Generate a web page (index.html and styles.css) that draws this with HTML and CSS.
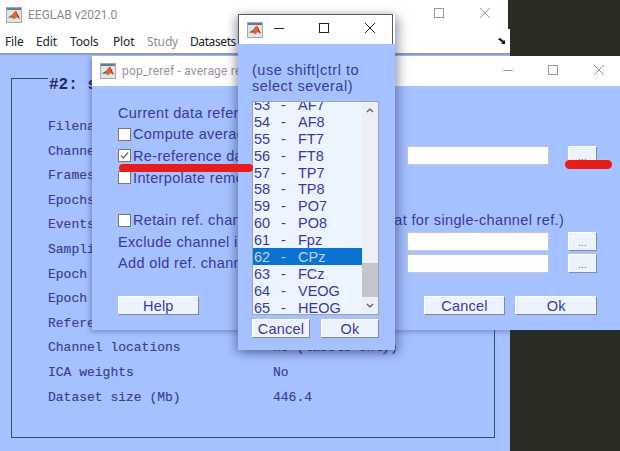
FILE: index.html
```html
<!DOCTYPE html>
<html lang="en">
<head>
<meta charset="utf-8">
<title>EEGLAB</title>
<link rel="stylesheet" href="styles.css">
</head>
<body>
<svg class="defs" width="0" height="0">
  <symbol id="ml" viewBox="0 0 16 16">
    <rect x="0.5" y="0.5" width="15" height="15" fill="#e4e4e4" stroke="#a8a8a8"/>
    <rect x="1" y="1" width="14" height="2" fill="#5f7f9f"/>
    <path d="M2 10.5 L6 8 L8 5 L10 3.5 L14 12 L11 10 L8 12.5 L6 10.5 Z" fill="#e8622a"/>
    <path d="M2 10.5 L6 8 L7.5 10 L6 10.5 Z" fill="#3c78b8"/>
    <path d="M10 3.5 L14 12 L11.5 10 Z" fill="#b5341a"/>
  </symbol>
</svg>

<section class="win main-win">
  <header class="titlebar main-title">
    <svg class="appicon"><use href="#ml"/></svg>
    <span class="title-text">EEGLAB v2021.0</span>
    <span class="ctl ctl-max"></span>
    <svg class="ctl-x" viewBox="0 0 10 10"><path d="M0 0L10 10M10 0L0 10"/></svg>
  </header>
  <nav class="menubar">
    <span class="m m-file">File</span><span class="m m-edit">Edit</span><span class="m m-tools">Tools</span><span class="m m-plot">Plot</span><span class="m m-study">Study</span><span class="m m-data">Datasets</span>
    <svg class="dock" viewBox="0 0 8 7"><path d="M0 1L2 0L6 3L7 2L7 6L3 6L4.5 4.5L1 2Z"/></svg>
  </nav>
  <div class="main-body">
    <div class="frame">
      <h2 class="frame-title">#2: sub</h2>
      <dl class="info">
        <div class="info-row"><dt>Filename</dt><dd></dd></div>
        <div class="info-row"><dt>Channels</dt><dd></dd></div>
        <div class="info-row"><dt>Frames</dt><dd></dd></div>
        <div class="info-row"><dt>Epochs</dt><dd></dd></div>
        <div class="info-row"><dt>Events</dt><dd></dd></div>
        <div class="info-row"><dt>Sampling</dt><dd></dd></div>
        <div class="info-row"><dt>Epoch</dt><dd></dd></div>
        <div class="info-row"><dt>Epoch</dt><dd></dd></div>
        <div class="info-row"><dt>Reference</dt><dd></dd></div>
        <div class="info-row"><dt>Channel locations</dt><dd>no (labels only)</dd></div>
        <div class="info-row"><dt>ICA weights</dt><dd>No</dd></div>
        <div class="info-row"><dt>Dataset size (Mb)</dt><dd>446.4</dd></div>
      </dl>
    </div>
  </div>
</section>

<section class="win dlg-win">
  <header class="titlebar dlg-title">
    <svg class="appicon"><use href="#ml"/></svg>
    <span class="title-text">pop_reref - average reference</span>
    <span class="ctl-min"></span>
    <span class="ctl ctl-max"></span>
    <svg class="ctl-x" viewBox="0 0 10 10"><path d="M0 0L10 10M10 0L0 10"/></svg>
  </header>
  <div class="dlg-body">
    <div class="drow"><span class="lbl">Current data reference state is: unknown</span></div>
    <div class="drow"><span class="cb"></span><span class="lbl">Compute average reference</span></div>
    <div class="drow"><span class="cb"><svg viewBox="0 0 11 11"><path d="M2 5.5L4.5 8L9 2.5"/></svg></span><span class="lbl">Re-reference data</span><span class="field"></span><span class="dots">...</span></div>
    <div class="drow"><span class="cb"></span><span class="lbl">Interpolate removed channels</span></div>
    <div class="drow drow-empty"></div>
    <div class="drow"><span class="cb"></span><span class="lbl">Retain ref. channel(s) in data (will be flat for single-channel ref.)</span></div>
    <div class="drow"><span class="lbl">Exclude channel indices (EMG, EOG)</span><span class="field"></span><span class="dots">...</span></div>
    <div class="drow"><span class="lbl">Add old ref. channel back</span><span class="field"></span><span class="dots">...</span></div>
    <div class="dlg-actions">
      <button class="btn btn-help">Help</button>
      <button class="btn btn-cancel">Cancel</button>
      <button class="btn btn-ok">Ok</button>
    </div>
  </div>
</section>

<section class="win pick-win">
  <header class="titlebar pick-title">
    <svg class="appicon"><use href="#ml"/></svg>
    <span class="ctl-min"></span>
    <span class="ctl ctl-max dark"></span>
    <svg class="ctl-x dark" viewBox="0 0 10 10"><path d="M0 0L10 10M10 0L0 10"/></svg>
  </header>
  <div class="pick-body">
    <p class="hint">(use shift|ctrl to<br>select several)</p>
    <div class="listbox">
      <ul class="items">
        <li><b>53</b><i>-</i><span>AF7</span></li>
        <li><b>54</b><i>-</i><span>AF8</span></li>
        <li><b>55</b><i>-</i><span>FT7</span></li>
        <li><b>56</b><i>-</i><span>FT8</span></li>
        <li><b>57</b><i>-</i><span>TP7</span></li>
        <li><b>58</b><i>-</i><span>TP8</span></li>
        <li><b>59</b><i>-</i><span>PO7</span></li>
        <li><b>60</b><i>-</i><span>PO8</span></li>
        <li><b>61</b><i>-</i><span>Fpz</span></li>
        <li class="sel"><b>62</b><i>-</i><span>CPz</span></li>
        <li><b>63</b><i>-</i><span>FCz</span></li>
        <li><b>64</b><i>-</i><span>VEOG</span></li>
        <li><b>65</b><i>-</i><span>HEOG</span></li>
      </ul>
      <div class="scroll">
        <svg class="arrow" viewBox="0 0 8 5"><path d="M1 4L4 1L7 4"/></svg>
        <span class="track"><span class="thumb"></span></span>
        <svg class="arrow" viewBox="0 0 8 5"><path d="M1 1L4 4L7 1"/></svg>
      </div>
    </div>
    <div class="pick-actions">
      <button class="btn">Cancel</button>
      <button class="btn">Ok</button>
    </div>
  </div>
</section>

<span class="mark mark-a"></span>
<span class="mark mark-b"></span>
</body>
</html>
```

FILE: styles.css
```css
* { box-sizing: border-box; }
html, body { margin: 0; padding: 0; }
body {
  position: relative;
  width: 620px;
  height: 451px;
  overflow: hidden;
  background: #2b2b24;
  font-family: "Liberation Sans", sans-serif;
  color: #3a3a9c;
}
.defs { position: absolute; }

/* windows on the desktop */
.win { position: absolute; display: flex; flex-direction: column; overflow: hidden; }
.main-win { left: 0; top: 0; width: 510px; height: 451px; }
.dlg-win { left: 92px; top: 56px; width: 528px; height: 274px; box-shadow: -2px 2px 5px rgba(40, 50, 110, .35); overflow: visible; }
.pick-win { left: 238px; top: 14px; width: 157px; height: 336px; box-shadow: 4px 3px 10px rgba(30, 40, 90, .4), -4px 2px 8px rgba(30, 40, 90, .3); overflow: visible; }

.titlebar { position: relative; display: flex; align-items: center; flex: none; background: #fff; }
.main-title { height: 29px; width: 508px; padding-left: 6px; }
.dlg-title { height: 30px; padding-left: 8px; }
.pick-title { height: 30px; width: 155px; padding-left: 8px; border: 1px solid #5a5a5a; border-bottom: 0; }
.appicon { width: 16px; height: 16px; flex: none; }
.title-text { margin-left: 6px; font: 12px Roboto, "Liberation Sans", sans-serif; color: #8a8a8a; white-space: nowrap; }
.dlg-title .title-text { color: #9a8f9f; letter-spacing: .2px; }
.ctl { position: absolute; width: 10px; height: 10px; border: 1px solid #9a9a9a; }
.ctl-x { position: absolute; width: 10px; height: 10px; fill: none; stroke: #9a9a9a; stroke-width: 1; }
.ctl-min { position: absolute; width: 10px; height: 1px; background: #9a9a9a; }
.ctl.dark { border-color: #222; }
.ctl-x.dark { stroke: #222; }
.pick-title .ctl-min { background: #222; }

.main-title .ctl { left: 434px; top: 8px; }
.main-title .ctl-x { left: 480px; top: 8px; }
.dlg-title .ctl-min { left: 411px; top: 14px; }
.dlg-title .ctl { left: 456px; top: 9px; }
.dlg-title .ctl-x { left: 502px; top: 9px; }
.pick-title .ctl-min { left: 35px; top: 13px; }
.pick-title .ctl { left: 80px; top: 8px; }
.pick-title .ctl-x { left: 126px; top: 8px; }

.menubar {
  position: relative;
  display: flex;
  align-items: center;
  flex: none;
  height: 26px;
  padding-left: 5px;
  background: #fff;
  font: 12px "Noto Sans", sans-serif;
  color: #222;
  border-bottom: 2px solid #8f9fc0;
}
.m { white-space: nowrap; letter-spacing: -.15px; }
.m-file { width: 31px; }
.m-edit { width: 34px; }
.m-tools { width: 43px; }
.m-plot { width: 34px; }
.m-study { width: 43px; color: #8c8c8c; }
.m-data { letter-spacing: -.4px; }
.dock { position: absolute; left: 498px; top: 9px; width: 8px; height: 7px; fill: #111; }

.main-body { flex: 1; background: #a6c1ff; padding: 23px 15px 14px 11px; }
.frame { height: 360px; border: 1px solid #3c4a6e; position: relative; }
.frame-title {
  margin: 0;
  position: absolute;
  left: 36px;
  top: -4px;
  padding: 0 0 0 1px;
  background: #a6c1ff;
  font: bold 16px/20px "Liberation Mono", monospace;
  color: #25256e;
}
.info { margin: 0; padding: 36px 0 0 36px; font: 13px/24.6px "Liberation Mono", monospace; color: #3b3b95; -webkit-text-stroke: .15px #3b3b95; }
.info-row { display: flex; height: 24.6px; }
.info-row dt { width: 225px; white-space: pre; }
.info-row dd { margin: 0; white-space: pre; }

/* dialog */
.dlg-body { position: relative; flex: 1; display: flex; flex-direction: column; background: #a6c1ff; padding: 16px 23px 0 26px; }
.drow { display: flex; align-items: center; height: 21.6px; flex: none; position: relative; white-space: nowrap; }
.drow-empty { height: 21px; }
.lbl { font-size: 14.5px; letter-spacing: .35px; }
.cb { width: 13px; height: 13px; flex: none; margin-right: 2px; background: #fff; border: 1px solid #777; display: flex; }
.cb svg { width: 11px; height: 11px; fill: none; stroke: #666; stroke-width: 1.2; }
.field { position: absolute; left: 289px; top: 1px; width: 142px; height: 19px; background: #fff; border: 1px solid #c4c8d2; }
.dots { position: absolute; left: 450px; top: 1px; width: 29px; height: 19px; display: flex; align-items: flex-end; justify-content: center; background: #ecf3ff; border: 1px solid #fff; border-right: 1px solid #8a8d96; border-bottom: 1px solid #8a8d96; font-size: 10px; line-height: 14px; color: #777; }
.dlg-actions { display: flex; margin-top: 22px; }
.btn { display: block; height: 19px; padding: 0; background: #ecf3ff; border: 1px solid #fff; border-right: 1px solid #85888f; border-bottom: 1px solid #85888f; font: 14.5px/16px "Liberation Sans", sans-serif; letter-spacing: .2px; color: #3a3a9c; }
.btn-help { width: 81px; margin-right: 225px; }
.btn-cancel { width: 82px; margin-right: 10px; }
.btn-ok { width: 82px; }

/* channel picker */
.pick-body { flex: 1; background: #a6c1ff; padding: 18px 16px 0 14px; display: flex; flex-direction: column; }
.hint { margin: 0; font-size: 14.5px; line-height: 16px; letter-spacing: .5px; }
.listbox { display: flex; margin-top: 7px; width: 127px; height: 214px; overflow: hidden; background: #ecf4ff; border: 1px solid #9da2ad; }
.items { list-style: none; margin: -6px 0 0; padding: 0; width: 109px; flex: none; font-size: 14.5px; }
.items li { display: flex; height: 16.9px; line-height: 18.5px; color: #3a3a9c; padding-left: 1px; }
.items b { font-weight: 400; width: 27px; }
.items i { font-style: normal; width: 17px; }
.items .sel { background: #0b72cf; color: #b9d4f2; }
.scroll { flex: 1; display: flex; flex-direction: column; align-items: center; background: #ecf0f6; }
.arrow { flex: none; width: 8px; height: 5px; margin: 6px 0; fill: none; stroke: #555; stroke-width: 1.2; }
.track { flex: 1; width: 100%; display: flex; align-items: flex-end; }
.thumb { width: 100%; height: 34px; background: #c3c5ca; }
.pick-actions { display: flex; justify-content: space-between; margin-top: 4px; width: 127px; }
.pick-actions .btn { width: 58px; }

/* annotations */
.mark { position: absolute; background: #e81c1c; border-radius: 5px; }
.mark-a { left: 119px; top: 164px; width: 134px; height: 8px; }
.mark-b { left: 565px; top: 160px; width: 47px; height: 9px; }
```
